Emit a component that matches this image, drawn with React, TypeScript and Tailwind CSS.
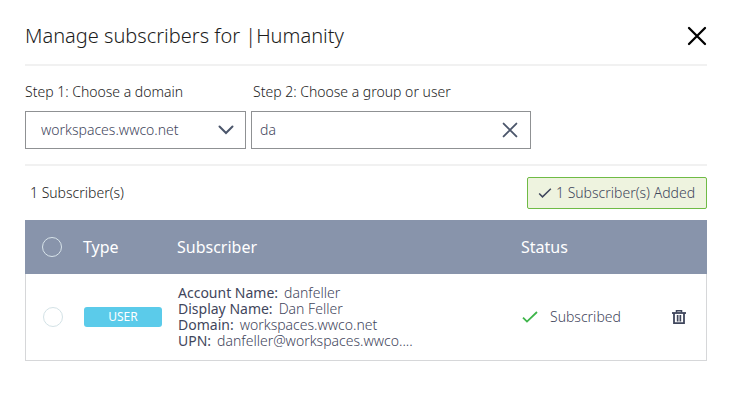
import { useState } from "react";

const details = [
  { label: "Account Name:", value: "danfeller" },
  { label: "Display Name:", value: "Dan Feller" },
  { label: "Domain:", value: "workspaces.wwco.net" },
  { label: "UPN:", value: "danfeller@workspaces.wwco...." },
];

function CrossIcon({ className }: { className: string }) {
  return (
    <svg viewBox="0 0 20 20" className={className} fill="none" stroke="currentColor" strokeWidth="2.3" strokeLinecap="round" aria-hidden="true">
      <path d="M2 2L18 18M18 2L2 18" />
    </svg>
  );
}

function CheckIcon({ className }: { className: string }) {
  return (
    <svg viewBox="0 0 16 12" className={className} fill="none" stroke="currentColor" strokeWidth="1.8" aria-hidden="true">
      <path d="M1 6.6L5 10.6L15 1" />
    </svg>
  );
}

function TrashIcon() {
  return (
    <svg viewBox="0 0 14 16" className="h-4 w-3.5" fill="none" stroke="currentColor" aria-hidden="true">
      <path d="M0 4H14" strokeWidth="1.8" />
      <path d="M4.5 3.5V1.7H9.5V3.5" strokeWidth="1.5" />
      <path d="M2 4V14.2H12V4" strokeWidth="1.8" />
      <path d="M5.5 6V12.5M8.5 6V12.5" strokeWidth="1.4" />
      <path d="M7 6V12.5" strokeWidth="1.4" opacity="0.5" />
    </svg>
  );
}

export default function App() {
  const [query, setQuery] = useState("da");

  return (
    <main className="bg-white pr-[23px] pl-[25px] font-['Noto_Sans',sans-serif] text-sm font-light text-[#1c1c1c]">
      <header className="flex h-[66px] items-center justify-between border-b-2 border-[#f1f1f1] pt-2">
        <h1 className="text-xl font-light">Manage subscribers for |Humanity</h1>
        <button type="button" aria-label="Close" className="text-black">
          <CrossIcon className="size-5" />
        </button>
      </header>

      <form className="flex gap-[5px] border-b-2 border-[#f1f1f1] pt-4 pb-[15px]" onSubmit={(e) => e.preventDefault()}>
        <div className="w-[221px]">
          <label htmlFor="domain" className="block h-[29px] leading-5">Step 1: Choose a domain</label>
          <div className="relative">
            <select id="domain" className="h-[38px] w-full appearance-none border border-[#8f9193] bg-white pl-[15px] text-[#3f465c]">
              <option>workspaces.wwco.net</option>
            </select>
            <svg viewBox="0 0 16 10" className="pointer-events-none absolute top-3.5 right-3 h-2.5 w-4 text-[#4b566b]" fill="none" stroke="currentColor" strokeWidth="2" strokeLinecap="round" aria-hidden="true">
              <path d="M1.5 1.5L8 8L14.5 1.5" />
            </svg>
          </div>
        </div>
        <div className="w-[280px]">
          <label htmlFor="member" className="block h-[29px] pl-0.5 leading-5">Step 2: Choose a group or user</label>
          <div className="flex h-[38px] items-center border border-[#8f9193] pr-3">
            <input id="member" type="text" value={query} onChange={(e) => setQuery(e.target.value)} className="min-w-0 flex-1 pl-2 text-[#3f465c] outline-none" />
            <button type="button" aria-label="Clear" className="text-[#4b566b]" onClick={() => setQuery("")}>
              <CrossIcon className="size-4" />
            </button>
          </div>
        </div>
      </form>

      <div className="flex h-[54px] items-center justify-between">
        <p className="pl-[5px]">1 Subscriber(s)</p>
        <p role="status" className="flex h-8 w-[180px] items-center gap-1 rounded-xs border border-[#6fbb45] bg-[#eef3df] pl-2.5 text-[#3f465c]">
          <CheckIcon className="h-2.5 w-3.5" />
          1 Subscriber(s) Added
        </p>
      </div>

      <table className="w-full table-fixed border-separate border-spacing-0 text-left text-[#3f465c]">
        <thead className="bg-[#8894ab] text-base text-white">
          <tr className="h-[54px]">
            <th className="w-[58px] pl-[17px]">
              <input type="checkbox" aria-label="Select all subscribers" className="block size-5 appearance-none rounded-full border border-[#d8e4ea] checked:bg-[#5bcbea]" />
            </th>
            <th className="w-[94px] font-[450]">Type</th>
            <th className="font-[450]">Subscriber</th>
            <th className="w-[140px] font-[450]">Status</th>
            <th className="w-[46px]" aria-label="Actions"></th>
          </tr>
        </thead>
        <tbody>
          <tr className="h-[87px]">
            <td className="border-b border-l border-[#d6d7d9] pl-[17px]">
              <input type="checkbox" aria-label="Select Dan Feller" className="block size-5 appearance-none rounded-full border border-[#d3e2e6] checked:bg-[#5bcbea]" />
            </td>
            <td className="border-b border-[#d6d7d9] pl-px">
              <span className="block h-5 w-[78px] rounded-[3px] bg-[#5bcbea] text-center text-xs leading-5 font-[450] text-white">USER</span>
            </td>
            <td className="border-b border-[#d6d7d9] pl-px">
              <dl className="leading-4">
                {details.map((d) => (
                  <div key={d.label} className="flex gap-1.5 whitespace-nowrap">
                    <dt className="font-[450]">{d.label}</dt>
                    <dd>{d.value}</dd>
                  </div>
                ))}
              </dl>
            </td>
            <td className="border-b border-[#d6d7d9] pl-px">
              <span className="flex items-center gap-3">
                <CheckIcon className="h-3 w-4 text-[#3eb54a]" />
                Subscribed
              </span>
            </td>
            <td className="border-r border-b border-[#d6d7d9]">
              <button type="button" aria-label="Remove Dan Feller" className="block pl-[11px]">
                <TrashIcon />
              </button>
            </td>
          </tr>
        </tbody>
      </table>
    </main>
  );
}
